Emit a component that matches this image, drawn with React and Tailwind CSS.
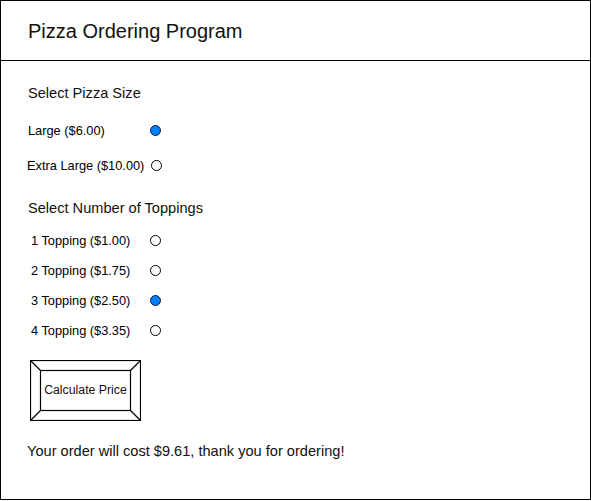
import React from "react";

const font = { fontFamily: '"Liberation Sans", Arial, sans-serif' };

function Radio({ checked }) {
  return checked ? (
    <span className="block w-[11px] h-[11px] rounded-full bg-[#007fff] border border-[#1a1a2e] box-border shrink-0" />
  ) : (
    <span className="block w-[11px] h-[11px] rounded-full bg-white border border-black box-border shrink-0" />
  );
}

function Row({ label, checked, labelLeft, radioLeft, className }) {
  return (
    <div className={"flex items-center h-[20px] relative " + className}>
      <span className="relative top-[1px] text-[12.8px] leading-[20px] text-black whitespace-nowrap" style={{ marginLeft: labelLeft }}>
        {label}
      </span>
      <span className="absolute top-0 bottom-0 flex items-center" style={{ left: radioLeft }}>
        <Radio checked={checked} />
      </span>
    </div>
  );
}

export default function App() {
  return (
    <div className="w-[591px] h-[501px] bg-white" style={font}>
      <div className="w-[591px] h-[500px] border border-black box-border flex flex-col">
        <div className="h-[60px] shrink-0 border-b border-black flex items-center pl-[27px]">
          <span className="text-[20px] text-[#111]">Pizza Ordering Program</span>
        </div>
        <div className="flex flex-col">
          <div className="h-[20px] mt-[22px] flex items-center pl-[27px] text-[14.6px] text-[#111]">
            <span className="relative top-[1px]">Select Pizza Size</span>
          </div>
          <Row className="mt-[17px]" label="Large ($6.00)" checked labelLeft={27} radioLeft={149} />
          <Row className="mt-[15px]" label="Extra Large ($10.00)" labelLeft={26} radioLeft={150} />
          <div className="h-[20px] mt-[23px] flex items-center pl-[27px] text-[14.6px] text-[#111]">
            <span className="relative top-[1px]">Select Number of Toppings</span>
          </div>
          <Row className="mt-[12px]" label="1 Topping ($1.00)" labelLeft={30} radioLeft={149} />
          <Row className="mt-[10px]" label="2 Topping ($1.75)" labelLeft={30} radioLeft={149} />
          <Row className="mt-[10px]" label="3 Topping ($2.50)" checked labelLeft={30} radioLeft={149} />
          <Row className="mt-[10px]" label="4 Topping ($3.35)" labelLeft={30} radioLeft={149} />
          <div className="mt-[20px] ml-[29px] w-[111px] h-[61px] relative flex items-center justify-center">
            <svg className="absolute inset-0" width="111" height="61" viewBox="0 0 111 61">
              <rect x="0.5" y="0.5" width="110" height="60" fill="white" stroke="black" strokeWidth="1.2" />
              <rect x="10.5" y="10.5" width="90" height="40" fill="white" stroke="black" strokeWidth="1.2" />
              <line x1="0.5" y1="0.5" x2="10.5" y2="10.5" stroke="black" strokeWidth="1.2" />
              <line x1="110.5" y1="0.5" x2="100.5" y2="10.5" stroke="black" strokeWidth="1.2" />
              <line x1="0.5" y1="60.5" x2="10.5" y2="50.5" stroke="black" strokeWidth="1.2" />
              <line x1="110.5" y1="60.5" x2="100.5" y2="50.5" stroke="black" strokeWidth="1.2" />
            </svg>
            <span className="relative text-[12.3px] text-[#111]">Calculate Price</span>
          </div>
          <div className="h-[20px] mt-[20px] flex items-center pl-[26px] text-[14.6px] text-[#111]">
            <span className="relative top-[1px]">Your order will cost $9.61, thank you for ordering!</span>
          </div>
        </div>
      </div>
    </div>
  );
}
